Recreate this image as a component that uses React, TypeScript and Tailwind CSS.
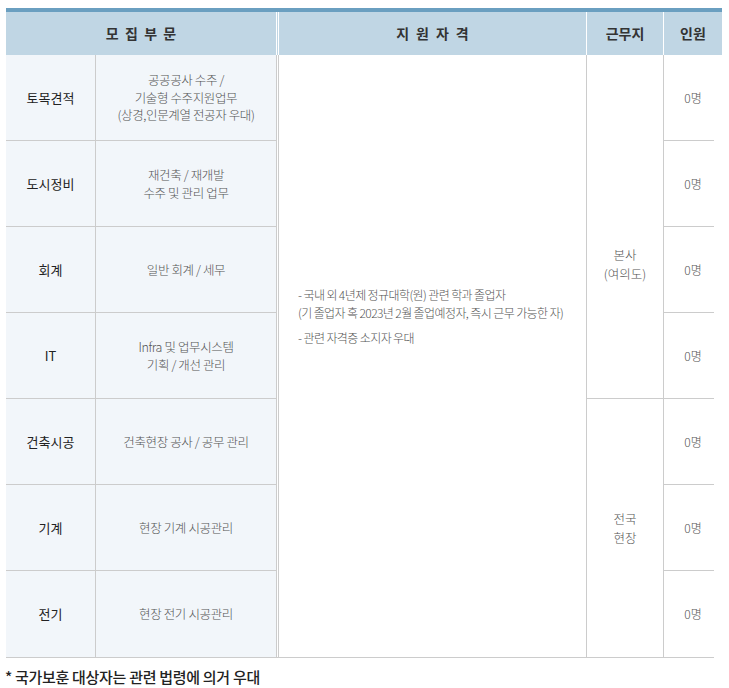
import React from "react";

const rows = [
  { name: "토목견적", desc: ["공공공사 수주 /", "기술형 수주지원업무", "(상경,인문계열 전공자 우대)"] },
  { name: "도시정비", desc: ["재건축 / 재개발", "수주 및 관리 업무"] },
  { name: "회계", desc: ["일반 회계 / 세무"] },
  { name: "IT", desc: ["Infra 및 업무시스템", "기획 / 개선 관리"] },
  { name: "건축시공", desc: ["건축현장 공사 / 공무 관리"] },
  { name: "기계", desc: ["현장 기계 시공관리"] },
  { name: "전기", desc: ["현장 전기 시공관리"] },
];

export default function App() {
  return (
    <div
      className="w-[729px] h-[688px] bg-white pt-2"
      style={{ fontFamily: '"Noto Sans CJK KR", "Noto Sans", sans-serif' }}
    >
      <div className="ml-[6px] w-[716px]">
        {/* header */}
        <div className="border-t-[4px] border-[#6a9fc0] flex h-[47px] bg-[#c0d6e4] text-[14px] font-bold text-[#333]">
          <div className="w-[270px] flex items-center justify-center tracking-[0.45em] pl-[0.45em]">
            모집부문
          </div>
          <div className="w-[311px] border-l-[3px] border-double border-white flex items-center justify-center tracking-[0.5em] pl-[0.5em] border-r border-r-white">
            지원자격
          </div>
          <div className="w-[77px] border-r border-white flex items-center justify-center">근무지</div>
          <div className="w-[58px] flex items-center justify-center">인원</div>
        </div>

        {/* body */}
        <div className="grid grid-cols-[90px_180px_311px_77px_50px] grid-rows-[repeat(7,86px)] border-b border-[#cccccc] w-[708px]">
          {rows.map((r, i) => (
            <React.Fragment key={r.name}>
              <div
                className="bg-[#f2f6fa] border-r border-b border-[#cccccc] flex items-center justify-center text-[13px] font-normal text-[#222]"
                style={{ gridRow: i + 1, gridColumn: 1, borderBottomWidth: i === 6 ? 0 : 1 }}
              >
                {r.name}
              </div>
              <div
                className="bg-[#f2f6fa] border-b border-[#cccccc] flex flex-col items-center justify-center text-[12.5px] leading-[17.5px] font-light text-[#555] tracking-[-0.03em]"
                style={{ gridRow: i + 1, gridColumn: 2, borderBottomWidth: i === 6 ? 0 : 1 }}
              >
                {r.desc.map((d) => (
                  <span key={d}>{d}</span>
                ))}
              </div>
              <div
                className="border-b border-[#cccccc] flex items-center justify-center pl-2 text-[12px] font-light text-[#555]"
                style={{ gridRow: i + 1, gridColumn: 5, borderBottomWidth: i === 6 ? 0 : 1 }}
              >
                0명
              </div>
            </React.Fragment>
          ))}

          <div className="col-start-3 row-start-1 row-span-7 border-l-[3px] border-double border-[#cccccc] border-r border-r-[#cccccc] flex flex-col justify-center pl-[19px] pb-[80px] text-[12px] font-light text-[#555] tracking-[-0.05em]">
            <p className="leading-[18px]">- 국내 외 4년제 정규대학(원) 관련 학과 졸업자</p>
            <p className="leading-[18px]">(기 졸업자 혹 2023년 2월 졸업예정자, 즉시 근무 가능한 자)</p>
            <p className="leading-[18px] mt-[7px]">- 관련 자격증 소지자 우대</p>
          </div>

          <div className="col-start-4 row-start-1 row-span-4 border-r border-b border-[#cccccc] flex flex-col items-center justify-center pt-[74px] text-[12.5px] leading-[19px] font-light text-[#555]">
            <span>본사</span>
            <span>(여의도)</span>
          </div>
          <div className="col-start-4 row-start-5 row-span-3 border-r border-[#cccccc] flex flex-col items-center justify-center text-[12.5px] leading-[19px] font-light text-[#555]">
            <span>전국</span>
            <span>현장</span>
          </div>
        </div>
      </div>

      <p className="mt-[8px] ml-[5px] text-[15px] font-medium text-[#222] tracking-[-0.02em]">
        * 국가보훈 대상자는 관련 법령에 의거 우대
      </p>
    </div>
  );
}
